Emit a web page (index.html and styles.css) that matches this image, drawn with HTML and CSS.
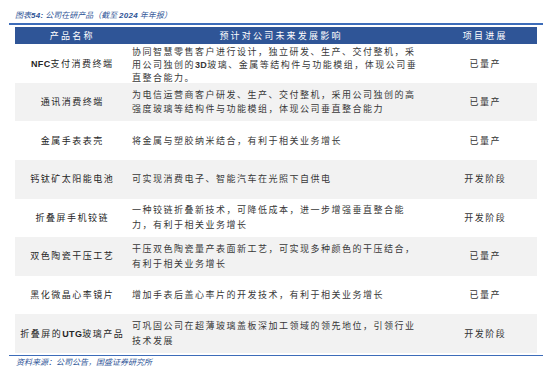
FILE: index.html
```html
<!DOCTYPE html>
<html lang="zh">
<head>
<meta charset="utf-8">
<link rel="stylesheet" href="styles.css">
</head>
<body>
<div class="page">
  <div class="title">图表<span class="lat">54:</span> 公司在研产品（截至 <span class="lat">2024</span> 年年报）</div>
  <div class="rule-top"></div>
  <div class="table">
    <div class="row head">
      <div class="c1">产品名称</div>
      <div class="c2h">预计对公司未来发展影响</div>
      <div class="c3">项目进展</div>
    </div>
    <div class="row">
      <div class="c1"><span class="lat">NFC</span>支付消费终端</div>
      <div class="c2 tight">协同智慧零售客户进行设计，独立研发、生产、交付整机，采<br>用公司独创的<span class="lat">3D</span>玻璃、金属等结构件与功能模组，体现公司垂<br>直整合能力。</div>
      <div class="c3">已量产</div>
    </div>
    <div class="row alt">
      <div class="c1">通讯消费终端</div>
      <div class="c2">为电信运营商客户研发、生产、交付整机，采用公司独创的高<br>强度玻璃等结构件与功能模组，体现公司垂直整合能力</div>
      <div class="c3">已量产</div>
    </div>
    <div class="row">
      <div class="c1">金属手表表壳</div>
      <div class="c2">将金属与塑胶纳米结合，有利于相关业务增长</div>
      <div class="c3">已量产</div>
    </div>
    <div class="row alt">
      <div class="c1">钙钛矿太阳能电池</div>
      <div class="c2">可实现消费电子、智能汽车在光照下自供电</div>
      <div class="c3">开发阶段</div>
    </div>
    <div class="row">
      <div class="c1">折叠屏手机铰链</div>
      <div class="c2">一种铰链折叠新技术，可降低成本，进一步增强垂直整合能<br>力，有利于相关业务增长</div>
      <div class="c3">开发阶段</div>
    </div>
    <div class="row alt">
      <div class="c1">双色陶瓷干压工艺</div>
      <div class="c2">干压双色陶瓷量产表面新工艺，可实现多种颜色的干压结合，<br>有利于相关业务增长</div>
      <div class="c3">已量产</div>
    </div>
    <div class="row">
      <div class="c1">黑化微晶心率镜片</div>
      <div class="c2">增加手表后盖心率片的开发技术，有利于相关业务增长</div>
      <div class="c3">已量产</div>
    </div>
    <div class="row alt">
      <div class="c1">折叠屏的<span class="lat">UTG</span>玻璃产品</div>
      <div class="c2">可巩固公司在超薄玻璃盖板深加工领域的领先地位，引领行业<br>技术发展</div>
      <div class="c3">开发阶段</div>
    </div>
  </div>
  <div class="rule-bottom"></div>
  <div class="source">资料来源：公司公告，国盛证券研究所</div>
</div>
</body>
</html>
```

FILE: styles.css
```css
html, body {
  margin: 0;
  padding: 0;
  background: #ffffff;
}
body {
  font-family: "Noto Sans CJK SC", "Noto Sans", sans-serif;
  color: #333333;
}
.page {
  width: 554px;
  height: 375px;
  overflow: hidden;
}
.title {
  height: 13px;
  padding: 10px 0 0 15px;
  font-size: 8px;
  line-height: 10px;
  font-style: italic;
  color: #2f5597;
}
.title .lat {
  font-family: "Liberation Sans", sans-serif;
  font-weight: bold;
}
.rule-top {
  margin: 0 11px 0 9px;
  height: 2px;
  background: #3d6cb9;
}
.table {
  margin: 2px 0 0 15px;
  width: 522px;
}
.row {
  display: grid;
  grid-template-columns: 113px 304px 105px;
  height: 38.6px;
  align-items: center;
  font-size: 9px;
  letter-spacing: 1.5px;
  line-height: 14.5px;
}
.row.alt {
  background: #f2f2f2;
}
.row.head {
  height: 17.3px;
  background: #2f5597;
  color: #ffffff;
  letter-spacing: 2.2px;
  line-height: 12px;
}
.c1 {
  text-align: center;
  padding-left: 1.5px;
  white-space: nowrap;
  color: #262626;
}
.c2 {
  padding-left: 4px;
  white-space: nowrap;
  color: #383838;
}
.c2h {
  text-align: center;
  padding-left: 2px;
}
.c2.tight {
  line-height: 12.8px;
  padding-top: 2px;
}
.c3 {
  text-align: center;
  padding-left: 1.5px;
  white-space: nowrap;
}
.head .c1, .head .c3 {
  color: #ffffff;
}
.lat {
  font-family: "Liberation Sans", sans-serif;
  font-weight: bold;
  letter-spacing: 0.3px;
}
.rule-bottom {
  margin: 1.5px 11px 0 9px;
  height: 1.5px;
  background: #3d6cb9;
}
.source {
  padding: 1px 0 0 16px;
  font-size: 8px;
  line-height: 10px;
  font-style: italic;
  color: #2f5597;
}
```
